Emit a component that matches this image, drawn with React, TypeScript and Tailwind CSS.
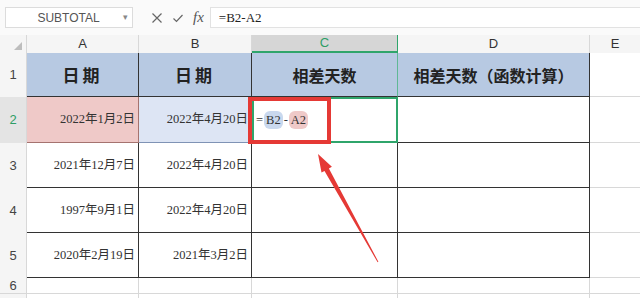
import React from "react";

const serif = "font-['Liberation_Serif','Noto_Sans_CJK_SC',serif]";
const sans = "font-['Liberation_Sans','Noto_Sans_CJK_SC',sans-serif]";

const rows = [
  { n: "3", a: "2021年12月7日", b: "2022年4月20日", h: "h-[45px]" },
  { n: "4", a: "1997年9月1日", b: "2022年4月20日", h: "h-[45px]" },
  { n: "5", a: "2020年2月19日", b: "2021年3月2日", h: "h-[45px]" },
];

const FormulaBar: React.FC = () => (
  <div className="flex h-[35px] items-center bg-[#fafafa]">
    <div className={`ml-[5px] flex h-[21px] w-[128px] items-center border border-[#dcdcdc] bg-white ${sans}`}>
      <span className="flex-1 pl-[8px] text-center text-[12px] text-[#555]">SUBTOTAL</span>
      <span className="pr-[4px] text-[9px] text-[#888]">▾</span>
    </div>
    <div className="ml-[18px] flex items-center gap-[9px] text-[#555]">
      <svg width="12" height="12" viewBox="0 0 12 12">
        <path d="M1.5 1.5 L10.5 10.5 M10.5 1.5 L1.5 10.5" stroke="#666" strokeWidth="1.2" fill="none" />
      </svg>
      <svg width="12" height="12" viewBox="0 0 12 12">
        <path d="M1.5 6.5 L4.5 9.5 L10.5 3" stroke="#666" strokeWidth="1.2" fill="none" />
      </svg>
      <span className={`text-[15px] italic text-[#555] ${serif}`}>fx</span>
    </div>
    <div className={`ml-[6px] flex h-[21px] flex-1 items-center border-y border-l border-[#e2e2e2] bg-white pl-[8px] text-[13px] text-[#222] ${serif}`}>
      =B2-A2
    </div>
  </div>
);

const App: React.FC = () => {
  return (
    <div className="relative h-[298px] w-[640px] overflow-hidden bg-white">
      <FormulaBar />

      {/* column headers */}
      <div className={`flex h-[18px] bg-[#f5f5f5] text-[13px] text-[#333] ${sans}`}>
        <div className="flex w-[27px] items-end justify-end border-r border-[#d8d8d8] pb-[3px] pr-[4px]">
          <svg width="8" height="8" viewBox="0 0 8 8"><path d="M8 0 L8 8 L0 8 Z" fill="#bdbdbd" /></svg>
        </div>
        <div className="flex w-[112px] items-center justify-center border-r border-[#d8d8d8]">A</div>
        <div className="flex w-[113px] items-center justify-center border-r border-[#d8d8d8]">B</div>
        <div className="flex w-[146px] items-center justify-center border-b-2 border-r border-[#2fa56b] bg-[#d6d6d6] text-[#2e9e66]">C</div>
        <div className="flex w-[192px] items-center justify-center border-r border-[#d8d8d8]">D</div>
        <div className="flex flex-1 items-center justify-center">E</div>
      </div>

      {/* row 1 */}
      <div className="flex h-[44px]">
        <div className={`flex w-[27px] items-center justify-center border-r border-[#d8d8d8] bg-[#f5f5f5] text-[13px] text-[#444] ${sans}`}>1</div>
        <div className="flex w-[112px] items-center justify-center border-r border-b border-[#333] bg-[#b7c9e2] text-[17px] font-semibold tracking-[3px] text-[#222] font-['Noto_Sans_CJK_SC',sans-serif]">日期</div>
        <div className="flex w-[113px] items-center justify-center border-r border-b border-[#333] bg-[#b7c9e2] text-[17px] font-semibold tracking-[3px] text-[#222] font-['Noto_Sans_CJK_SC',sans-serif]">日期</div>
        <div className="flex w-[146px] items-center justify-center border-r border-b border-r-[#5fb896] border-b-[#333] bg-[#b7c9e2] text-[16px] font-semibold text-[#222] font-['Noto_Sans_CJK_SC',sans-serif]">相差天数</div>
        <div className="flex w-[192px] items-center justify-center border-r border-b border-[#333] bg-[#b7c9e2] text-[16px] font-semibold text-[#222] font-['Noto_Sans_CJK_SC',sans-serif]">相差天数（函数计算）</div>
        <div className="flex-1 border-b border-[#d8d8d8]" />
      </div>

      {/* row 2 */}
      <div className={`flex h-[46px] text-[12.5px] text-[#333] ${serif}`}>
        <div className={`flex w-[27px] items-center justify-center border-r border-[#d8d8d8] bg-[#e4e4e4] text-[13px] text-[#2e9e66] ${sans}`}>2</div>
        <div className="flex w-[112px] items-center justify-end border-r border-b border-[#a5736f] bg-[#efc9c8] pr-[3px]">2022年1月2日</div>
        <div className="flex w-[113px] items-center justify-end border-r border-b border-[#7f93b5] bg-[#dde5f4] pr-[3px]">2022年4月20日</div>
        <div className="flex w-[146px] items-center border-2 border-[#2fa56b] pl-[2px]">
          =<span className="mx-[1px] rounded-[6px] bg-[#c9d8ee] px-[2px]">B2</span>-
          <span className="ml-[1px] rounded-[6px] bg-[#efc9c8] px-[2px]">A2</span>
        </div>
        <div className="w-[192px] border-r border-b border-[#333]" />
        <div className="flex-1 border-b border-[#d8d8d8]" />
      </div>

      {/* rows 3-5 */}
      {rows.map((r) => (
        <div key={r.n} className={`flex ${r.h} text-[12.5px] text-[#333] ${serif}`}>
          <div className={`flex w-[27px] items-center justify-center border-r border-[#d8d8d8] bg-[#f5f5f5] text-[13px] text-[#444] ${sans}`}>{r.n}</div>
          <div className="flex w-[112px] items-center justify-end border-r border-b border-[#333] pr-[3px]">{r.a}</div>
          <div className="flex w-[113px] items-center justify-end border-r border-b border-[#333] pr-[3px]">{r.b}</div>
          <div className="w-[146px] border-r border-b border-[#333]" />
          <div className="w-[192px] border-r border-b border-[#333]" />
          <div className="flex-1 border-b border-[#d8d8d8]" />
        </div>
      ))}

      {/* row 6 */}
      <div className="flex h-[16px]">
        <div className={`flex w-[27px] items-center justify-center border-r border-b border-[#d8d8d8] bg-[#f5f5f5] text-[13px] text-[#444] ${sans}`}>6</div>
        <div className="w-[112px] border-r border-b border-[#d8d8d8]" />
        <div className="w-[113px] border-r border-b border-[#d8d8d8]" />
        <div className="w-[146px] border-r border-b border-[#d8d8d8]" />
        <div className="w-[192px] border-r border-b border-[#d8d8d8]" />
        <div className="flex-1 border-b border-[#d8d8d8]" />
      </div>
      <div className="flex h-[10px]">
        <div className="w-[27px] border-r border-[#d8d8d8] bg-[#f5f5f5]" />
        <div className="w-[112px] border-r border-[#d8d8d8]" />
        <div className="w-[113px] border-r border-[#d8d8d8]" />
        <div className="w-[146px] border-r border-[#d8d8d8]" />
        <div className="w-[192px] border-r border-[#d8d8d8]" />
      </div>

      {/* annotation: red box + arrow */}
      <div className="absolute left-[248px] top-[97px] h-[47px] w-[83px] border-4 border-[#e53935]" />
      <svg className="absolute left-0 top-0" width="640" height="298" viewBox="0 0 640 298">
        <polygon
          points="318,154 331.9,166.8 328.9,168.5 378.4,261.8 377.6,262.2 324.5,170.9 321.5,172.6"
          fill="#e53935"
        />
      </svg>
    </div>
  );
};

export default App;
